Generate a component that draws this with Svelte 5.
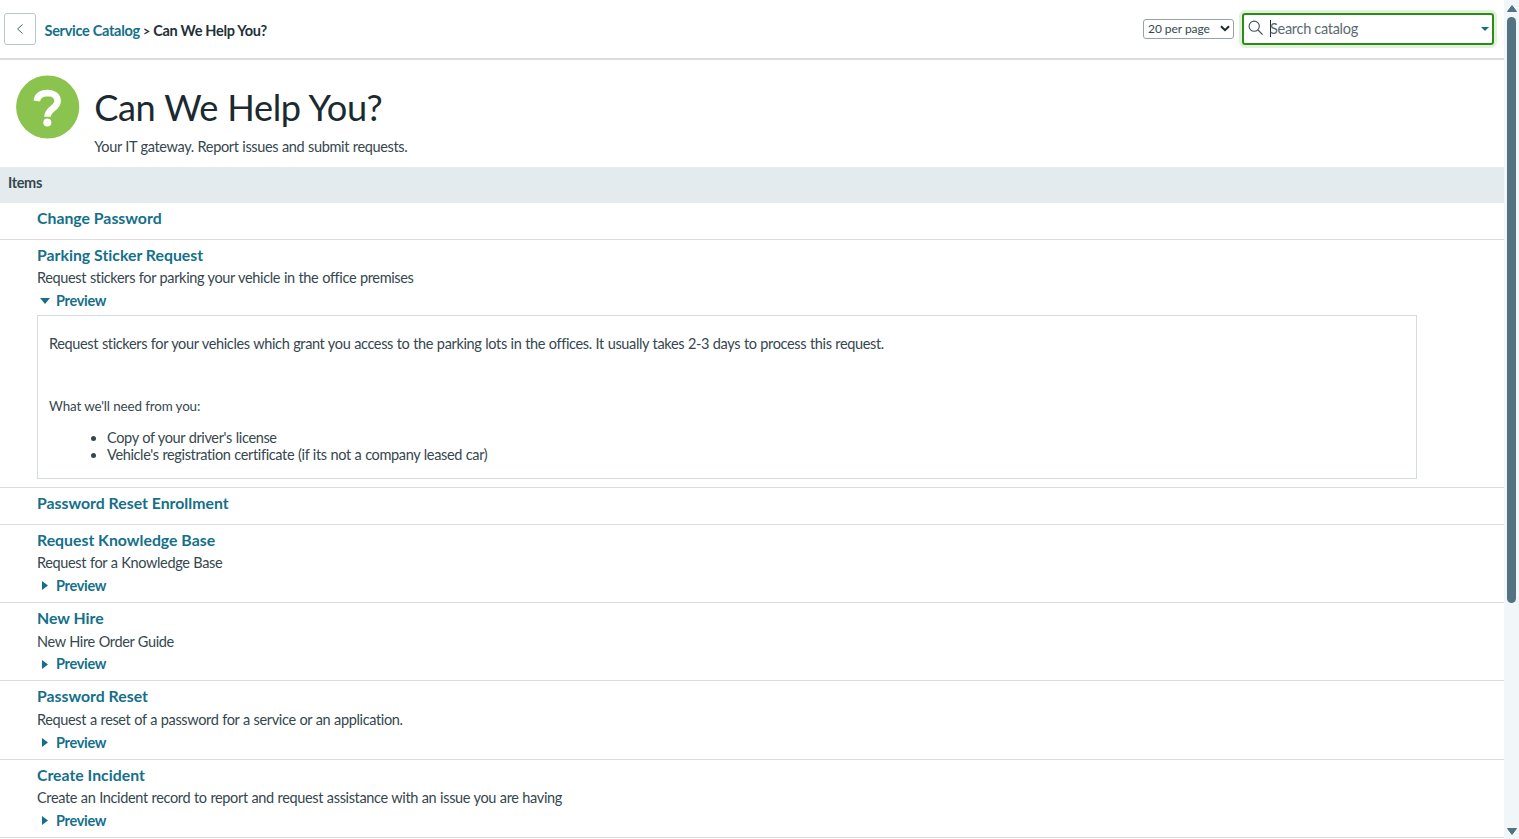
<script lang="ts">
  interface CatalogItem {
    name: string;
    description?: string;
    open?: boolean;
  }

  let perPage = $state('20');
  let search = $state('');
  let items = $state<CatalogItem[]>([
    { name: 'Change Password' },
    {
      name: 'Parking Sticker Request',
      description: 'Request stickers for parking your vehicle in the office premises',
      open: true
    },
    { name: 'Password Reset Enrollment' },
    { name: 'Request Knowledge Base', description: 'Request for a Knowledge Base' },
    { name: 'New Hire', description: 'New Hire Order Guide' },
    { name: 'Password Reset', description: 'Request a reset of a password for a service or an application.' },
    {
      name: 'Create Incident',
      description: 'Create an Incident record to report and request assistance with an issue you are having'
    }
  ]);

  function togglePreview(item: CatalogItem) {
    item.open = !item.open;
  }
</script>

<div class="page">
  <main class="content">
    <header class="topbar">
      <button type="button" class="back" aria-label="Back">
        <svg width="8" height="12" viewBox="0 0 8 12">
          <path d="M6.6 1.5 1.6 6l5 4.5" fill="none" stroke="#4d6772" stroke-width="1" />
        </svg>
      </button>
      <nav class="breadcrumb">
        <a href="#catalog">Service Catalog</a> <span class="sep">&gt;</span> <span>Can We Help You?</span>
      </nav>
      <div class="per-page">
        <select bind:value={perPage} aria-label="Items per page">
          <option value="10">10 per page</option>
          <option value="20">20 per page</option>
          <option value="50">50 per page</option>
        </select>
        <svg width="10" height="7" viewBox="0 0 10 7">
          <path d="M1 1.2 5 5.2l4-4" fill="none" stroke="#1b2a30" stroke-width="2" />
        </svg>
      </div>
      <div class="search">
        <svg class="glass" width="16" height="16" viewBox="0 0 16 16">
          <circle cx="6.2" cy="6.2" r="5.1" fill="none" stroke="#42555e" stroke-width="1.1" />
          <path d="m10 10 4.6 4.6" stroke="#42555e" stroke-width="1.2" />
        </svg>
        <span class="caret"></span>
        <input type="text" placeholder="Search catalog" bind:value={search} />
        <svg class="chevron" width="8" height="4" viewBox="0 0 8 4"><path d="M0 0h8L4 4z" fill="#14708a" /></svg>
      </div>
    </header>

    <section class="intro">
      <svg class="logo" width="64" height="64" viewBox="0 0 64 64">
        <circle cx="31.7" cy="32" r="31.6" fill="#8bc34f" />
        <path
          d="M20.8 26C21.4 20.8 25.4 18.2 31.4 18c6.2 0 10.2 3.2 10.2 8 0 7.6-10 7.4-10 15.8"
          fill="none"
          stroke="#fff"
          stroke-width="6.6"
        />
        <circle cx="31.3" cy="47.6" r="4" fill="#fff" />
      </svg>
      <div>
        <h1>Can We Help You?</h1>
        <p>Your IT gateway. Report issues and submit requests.</p>
      </div>
    </section>

    <h2 class="section-title">Items</h2>

    {#each items as item (item.name)}
      <article class="item" class:has-preview={item.description} class:open={item.open}>
        <a class="name" href="#item">{item.name}</a>
        {#if item.description}
          <div class="description">{item.description}</div>
          <button type="button" class="toggle" aria-expanded={!!item.open} onclick={() => togglePreview(item)}>
            <span class="arrow">
              {#if item.open}
                <svg width="10" height="6" viewBox="0 0 10 6"><path d="M0 0h10L5 6z" fill="#14708a" /></svg>
              {:else}
                <svg width="6" height="9" viewBox="0 0 6 9"><path d="M0 0v9l6-4.5z" fill="#14708a" /></svg>
              {/if}
            </span>
            Preview
          </button>
        {/if}
        {#if item.open}
          <div class="preview">
            <p>
              Request stickers for your vehicles which grant you access to the parking lots in the offices. It usually
              takes 2-3 days to process this request.
            </p>
            <p class="need">What we'll need from you:</p>
            <ul>
              <li>Copy of your driver's license</li>
              <li>Vehicle's registration certificate (if its not a company leased car)</li>
            </ul>
          </div>
        {/if}
      </article>
    {/each}
  </main>

  <div class="scrollbar">
    <svg width="10" height="7" viewBox="0 0 10 7"><path d="M5 0.5 9.5 6.5h-9z" fill="#537383" stroke="#537383" stroke-linejoin="round" /></svg>
    <div class="thumb"></div>
    <svg class="down" width="10" height="7" viewBox="0 0 10 7"><path d="M5 6.5.5.5h9z" fill="#537383" stroke="#537383" stroke-linejoin="round" /></svg>
  </div>
</div>

<style>
  :global(body) {
    overflow: hidden;
    background: #fff;
  }

  .page {
    display: flex;
    height: 839px;
    overflow: hidden;
    font-family: Lato, sans-serif;
    font-size: 14.52px;
    letter-spacing: -0.36px;
    word-spacing: 0.4px;
    color: #35474f;
  }

  .content {
    flex: 1;
    min-width: 0;
  }

  a {
    color: #14708a;
    text-decoration: none;
  }

  .topbar {
    display: flex;
    align-items: center;
    box-sizing: border-box;
    height: 60px;
    padding: 0 10px 1px 4px;
    border-bottom: 2px solid #dadddf;
  }

  .back {
    display: flex;
    align-items: center;
    justify-content: center;
    box-sizing: border-box;
    width: 32px;
    height: 32px;
    padding: 0;
    background: #fff;
    border: 1px solid #b9c6cb;
    border-radius: 3px;
  }

  .breadcrumb {
    flex: 1;
    margin: 3px 0 0 8.5px;
    font-weight: 700;
    letter-spacing: -0.3px;
    word-spacing: 0;
    color: #1f3038;
  }
  .sep {
    font-size: 12.5px;
  }

  .per-page {
    display: flex;
    align-items: center;
    box-sizing: border-box;
    width: 91px;
    height: 20px;
    padding: 0 3px 0 4px;
    border: 1px solid #94a3aa;
    border-radius: 3px;
  }
  .per-page select {
    flex: 1;
    min-width: 0;
    padding: 0;
    appearance: none;
    background: none;
    border: 0;
    font: 12px Lato, sans-serif;
    letter-spacing: -0.05px;
    color: #35474f;
  }

  .search {
    display: flex;
    align-items: center;
    box-sizing: border-box;
    width: 252px;
    height: 32px;
    margin-left: 8px;
    padding: 0 3px 0 4px;
    border: 2px solid #2f8a1c;
    border-radius: 3px;
    box-shadow: 0 0 0 3px #dff3d9;
  }
  .glass {
    margin-top: -1px;
  }
  .caret {
    width: 1px;
    height: 17px;
    margin: 0 -1px 0 6px;
    background: #1f3038;
  }
  .search input {
    flex: 1;
    min-width: 0;
    padding: 0;
    background: none;
    border: 0;
    outline: 0;
    font: inherit;
    letter-spacing: -0.3px;
  }
  .search input::placeholder {
    color: #5b6b73;
  }
  .chevron {
    margin-top: 1px;
  }

  .intro {
    display: flex;
    gap: 14.2px;
    box-sizing: border-box;
    height: 107px;
    padding: 15px 16px 0;
  }
  h1 {
    margin: 10px 0 0;
    font-size: 36.2px;
    font-weight: 400;
    line-height: 44px;
    letter-spacing: -0.38px;
    color: #1b2a30;
  }
  .intro p {
    margin: 8px 0 0;
    line-height: 20px;
  }

  .section-title {
    box-sizing: border-box;
    height: 36px;
    margin: 0;
    padding: 0 8px 3px;
    background: #e4ebee;
    font-size: 14.52px;
    font-weight: 700;
    line-height: 32px;
  }

  .item {
    display: flex;
    flex-direction: column;
    align-items: flex-start;
    box-sizing: border-box;
    height: 36.6px;
    padding: 4px 87px 0 37px;
    border-bottom: 1px solid #dadddf;
    line-height: 23px;
  }
  .item.has-preview {
    height: 78.3px;
  }
  .item.open {
    height: 248.7px;
  }

  .name {
    font-size: 15.8px;
    font-weight: 700;
    letter-spacing: 0.01px;
    word-spacing: 0;
    line-height: 22.8px;
  }
  .description {
    margin-top: 0.6px;
    line-height: 22.8px;
  }

  .toggle {
    display: flex;
    align-items: center;
    padding: 0;
    background: none;
    border: 0;
    font: inherit;
    font-weight: 700;
    letter-spacing: -0.3px;
    line-height: 22.8px;
    color: #14708a;
  }
  .arrow {
    display: flex;
    justify-content: center;
    width: 15px;
    margin: -1px 4px 0 0;
  }

  .preview {
    box-sizing: border-box;
    align-self: stretch;
    height: 164px;
    margin-top: 2.8px;
    padding: 19px 11px 0;
    border: 1px solid #d5dcdf;
    line-height: 17px;
  }
  .preview p {
    margin: 0;
  }
  .preview .need {
    margin-top: 46px;
    font-size: 13.4px;
    letter-spacing: -0.12px;
    word-spacing: 0;
  }
  .preview ul {
    margin: 14px 0 0;
    padding-left: 58px;
  }

  .scrollbar {
    display: flex;
    flex-direction: column;
    align-items: center;
    box-sizing: border-box;
    width: 15px;
    padding: 5px 0 4px;
    background: #f1f7f8;
  }
  .thumb {
    width: 9px;
    height: 586px;
    margin-top: 5px;
    background: #537383;
    border-radius: 5px;
  }
  .down {
    margin-top: auto;
  }
</style>
